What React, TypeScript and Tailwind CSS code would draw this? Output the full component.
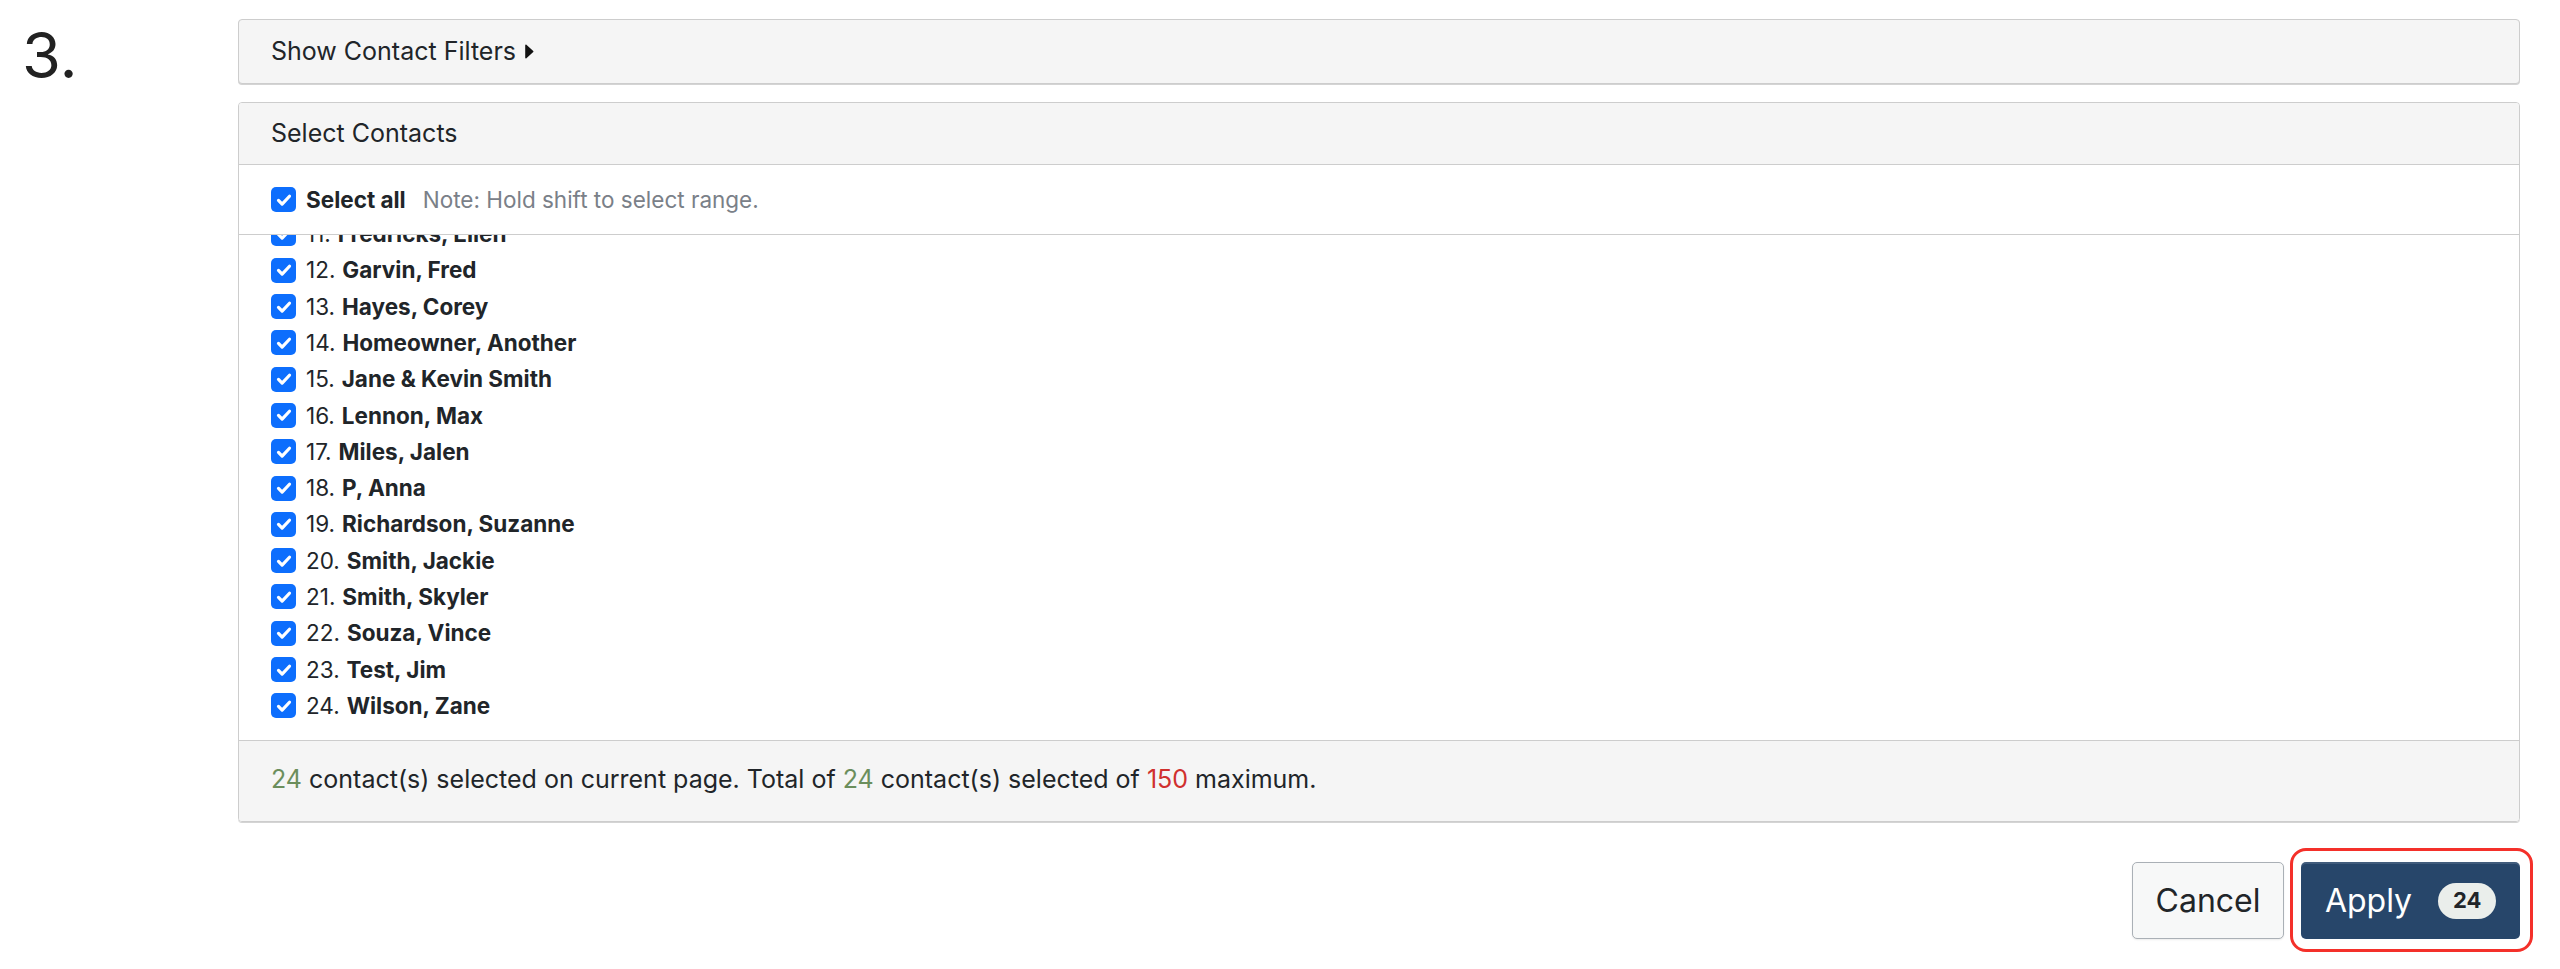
import React from "react";

type Contact = { id: number; name: string };

// list is scrolled to the bottom; rows above 11 are out of view
const CONTACTS: Contact[] = [
  { id: 11, name: "Fredricks, Ellen" },
  { id: 12, name: "Garvin, Fred" },
  { id: 13, name: "Hayes, Corey" },
  { id: 14, name: "Homeowner, Another" },
  { id: 15, name: "Jane & Kevin Smith" },
  { id: 16, name: "Lennon, Max" },
  { id: 17, name: "Miles, Jalen" },
  { id: 18, name: "P, Anna" },
  { id: 19, name: "Richardson, Suzanne" },
  { id: 20, name: "Smith, Jackie" },
  { id: 21, name: "Smith, Skyler" },
  { id: 22, name: "Souza, Vince" },
  { id: 23, name: "Test, Jim" },
  { id: 24, name: "Wilson, Zane" },
];

function Check() {
  return (
    <span className="flex h-[25px] w-[25px] shrink-0 items-center justify-center rounded-[5px] bg-[#0d6efd]">
      <svg viewBox="0 0 20 20" className="h-[22px] w-[22px]" fill="none" aria-hidden="true">
        <path
          d="M5 10.4l3.3 3.4L15 6.6"
          stroke="white"
          strokeWidth="2.9"
          strokeLinecap="round"
          strokeLinejoin="round"
        />
      </svg>
    </span>
  );
}

export default function App() {
  const selected = 24;

  return (
    <div
      className="flex min-h-[969px] bg-white pt-[19px] text-[#212529]"
      style={{ fontFamily: "Inter, 'Noto Sans', sans-serif" }}
    >
      {/* step number */}
      <div className="w-[238px] shrink-0 pl-[22px]">
        <div className="mt-[5px] text-[63px] leading-none text-[#222]">3.</div>
      </div>

      <div className="mr-[40px] flex-1">
        {/* filters toggle */}
        <div className="flex h-[65px] items-center rounded-[4px] border border-[#cdcdcd] bg-[#f5f5f5] px-[32px] shadow-[0_1px_0_#d4d4d4]">
          <span className="text-[25px]">Show Contact Filters</span>
          <svg viewBox="0 0 10 14" className="ml-[8px] h-[15px] w-[11px]" aria-hidden="true">
            <path d="M1 1.2v11.6c0 .6.7.9 1.1.5l6.4-5.8c.3-.3.3-.7 0-1L2.1.7C1.7.3 1 .6 1 1.2z" fill="#111" />
          </svg>
        </div>

        {/* contacts card */}
        <div className="mt-[18px] overflow-hidden rounded-[4px] border border-[#cdcdcd] shadow-[0_1px_0_#d4d4d4]">
          <div className="flex h-[62px] items-center border-b border-[#cdcdcd] bg-[#f5f5f5] px-[32px] text-[25px]">
            Select Contacts
          </div>

          <div className="flex h-[70px] items-center border-b border-[#cdcdcd] bg-white px-[32px] text-[22.5px]">
            <Check />
            <span className="ml-[10px] font-bold">Select all</span>
            <span className="ml-[17px] text-[#7a8088]">Note: Hold shift to select range.</span>
          </div>

          <div className="flex h-[505px] flex-col justify-end overflow-hidden bg-white px-[32px] pb-[16px] text-[22.5px]">
            {CONTACTS.map((c) => (
              <label key={c.id} className="flex h-[36.3px] shrink-0 items-center">
                <Check />
                <span className="ml-[10px]">{c.id}.</span>
                <span className="ml-[7px] font-bold">{c.name}</span>
              </label>
            ))}
          </div>

          <div className="flex h-[81px] items-center border-t border-[#cdcdcd] bg-[#f5f5f5] px-[32px] pb-[2px] text-[25px]">
            <span>
              <span className="text-[#6b8e5c]">{selected}</span> contact(s) selected on current page. Total of{" "}
              <span className="text-[#6b8e5c]">{selected}</span> contact(s) selected of{" "}
              <span className="text-[#d0302e]">150</span> maximum.
            </span>
          </div>
        </div>

        {/* actions */}
        <div className="mt-[40px] flex justify-end gap-[17px]">
          <button
            type="button"
            className="h-[77px] w-[152px] rounded-[5px] border border-[#aab0b6] bg-[#f7f8f8] text-[32px] text-[#212529] shadow-[0_1px_2px_rgba(0,0,0,0.08)]"
          >
            Cancel
          </button>
          <div className="relative">
            <button
              type="button"
              className="flex h-[77px] w-[219px] items-center justify-center gap-[26px] rounded-[5px] bg-[#27466a] text-[32px] text-white shadow-[inset_0_2px_0_rgba(255,255,255,0.12)]"
            >
              <span>Apply</span>
              <span className="flex h-[36px] w-[58px] items-center justify-center rounded-full bg-[#eaeeeb] text-[22px] font-bold text-[#212529]">
                {selected}
              </span>
            </button>
            <span className="pointer-events-none absolute bottom-[-13px] left-[-11px] right-[-13px] top-[-14px] rounded-[16px] border-[3px] border-[#f4302a]" />
          </div>
        </div>
      </div>
    </div>
  );
}
